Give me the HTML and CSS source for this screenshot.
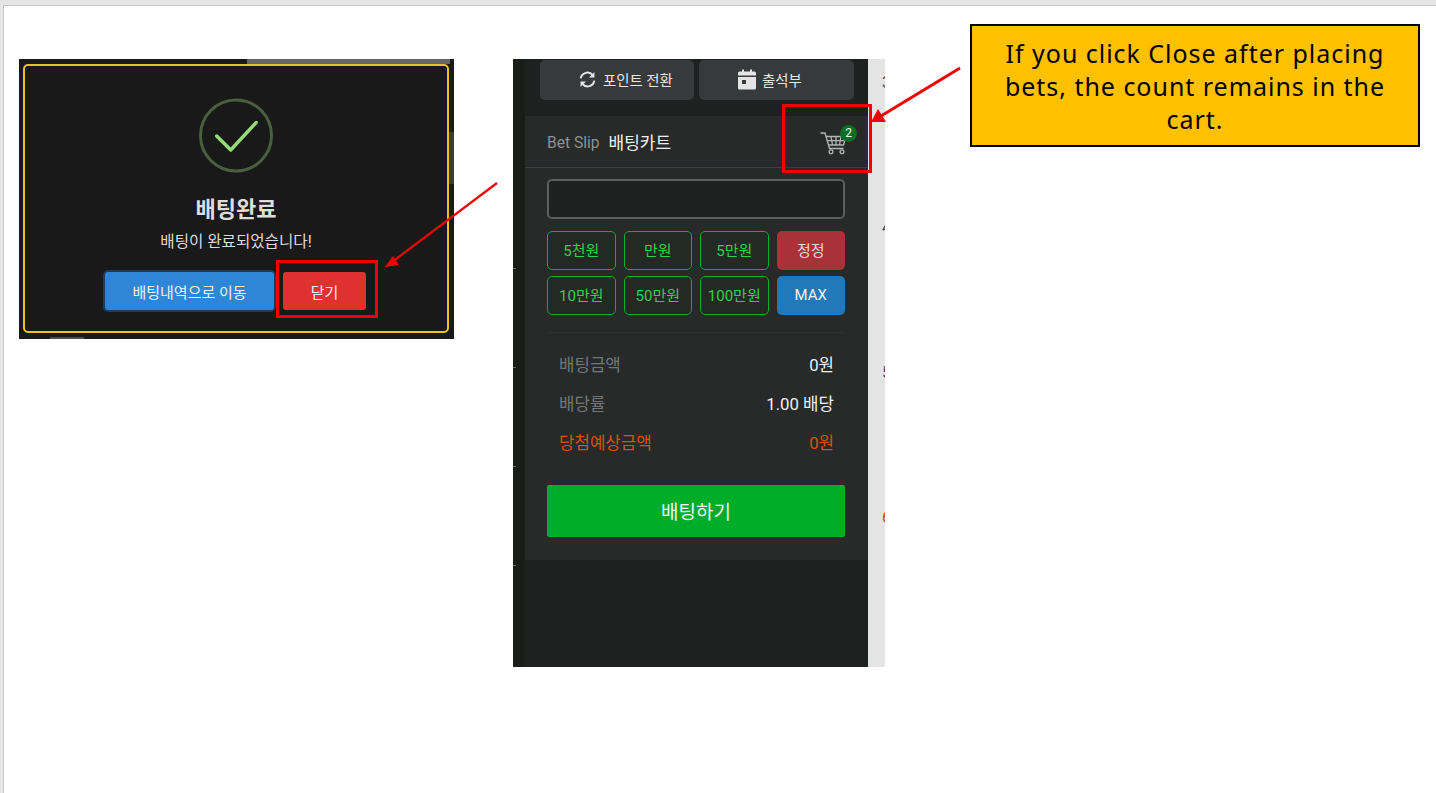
FILE: index.html
```html
<!DOCTYPE html>
<html lang="ko">
<head>
<meta charset="utf-8">
<title>Bet slip note</title>
<link rel="stylesheet" href="styles.css">
</head>
<body>
<main class="slide">
  <section class="shot-dialog">
    <div class="scrap scrap-top"></div>
    <div class="scrap scrap-right"></div>
    <div class="scrap scrap-bottom"></div>
    <div class="dialog">
      <svg class="check" width="76" height="76" viewBox="0 0 76 76" aria-hidden="true">
        <circle cx="38" cy="37.5" r="35.5" fill="none" stroke="#4a5f3e" stroke-width="3"/>
        <path d="M18.7 38 L32.7 52 L58.2 24.5" fill="none" stroke="#95dc78" stroke-width="3.4" stroke-linecap="round" stroke-linejoin="round"/>
      </svg>
      <h1 class="dialog-title">배팅완료</h1>
      <p class="dialog-text">배팅이 완료되었습니다!</p>
      <div class="dialog-actions">
        <button class="btn btn-history">배팅내역으로 이동</button>
        <button class="btn btn-close">닫기</button>
      </div>
    </div>
  </section>

  <section class="shot-panel">
    <div class="gutter">
      <i></i><i></i><i></i><i></i>
    </div>
    <div class="sidebar">
      <div class="top-actions">
        <button class="top-btn top-btn-points">
          <svg width="19" height="17" viewBox="0 0 18 16" aria-hidden="true">
            <path d="M2.6 7 A6.4 6.4 0 0 1 14 4" fill="none" stroke="#e4e4e4" stroke-width="1.9"/>
            <path d="M15.4 9 A6.4 6.4 0 0 1 4 12" fill="none" stroke="#e4e4e4" stroke-width="1.9"/>
            <path d="M15.6 0.8 V6 H10.4 Z M2.4 15.2 V10 H7.6 Z" fill="#e4e4e4"/>
          </svg>
          포인트 전환
        </button>
        <button class="top-btn top-btn-check">
          <svg width="18" height="21" viewBox="0 0 18 21" aria-hidden="true">
            <path d="M4 0.5 H6 V2.5 H12 V0.5 H14 V2.5 H16.5 A1.5 1.5 0 0 1 18 4 V6.5 H0 V4 A1.5 1.5 0 0 1 1.5 2.5 H4 Z" fill="#e4e4e4"/>
            <path fill-rule="evenodd" d="M0 8 H18 V19 A1.5 1.5 0 0 1 16.5 20.5 H1.5 A1.5 1.5 0 0 1 0 19 Z M4 11 V15 H8 V11 Z" fill="#e4e4e4"/>
          </svg>
          출석부
        </button>
      </div>
      <div class="slip">
        <header class="slip-head">
          <span class="slip-en">Bet Slip</span>
          <span class="slip-ko">배팅카트</span>
          <span class="cart">
            <svg width="27" height="23" viewBox="0 0 27 23" aria-hidden="true" fill="none" stroke="#b5b5b5" stroke-width="1.3">
              <path d="M0.5 1 H5 L9.5 16.5 H23.5"/>
              <path d="M6 4.5 H26 L23.5 13 H8.5"/>
              <path d="M11 4.5 L12.5 13 M16 4.5 V13 M21 4.5 L19.5 13 M7.2 8.7 H25"/>
              <circle cx="11" cy="19.8" r="1.9"/>
              <circle cx="22" cy="19.8" r="1.9"/>
            </svg>
            <b class="cart-count">2</b>
          </span>
        </header>
        <div class="slip-body">
          <div class="amount-input"></div>
          <div class="chips">
            <button class="chip">5천원</button>
            <button class="chip">만원</button>
            <button class="chip">5만원</button>
            <button class="chip chip-reset">정정</button>
            <button class="chip">10만원</button>
            <button class="chip">50만원</button>
            <button class="chip">100만원</button>
            <button class="chip chip-max">MAX</button>
          </div>
          <dl class="totals">
            <div class="total-row"><dt>배팅금액</dt><dd>0원</dd></div>
            <div class="total-row"><dt>배당률</dt><dd>1.00 배당</dd></div>
            <div class="total-row total-win"><dt>당첨예상금액</dt><dd>0원</dd></div>
          </dl>
          <button class="bet-btn">배팅하기</button>
        </div>
      </div>
    </div>
    <div class="behind">
      <span class="behind-num">3</span>
      <span class="behind-num">4</span>
      <span class="behind-num">5</span>
      <span class="behind-num behind-red">6</span>
    </div>
  </section>

  <aside class="callout">If you click Close after placing bets, the count remains in the cart.</aside>

  <div class="mark mark-close"></div>
  <div class="mark mark-cart"></div>
  <svg class="arrows" width="1436" height="793" viewBox="0 0 1436 793" aria-hidden="true">
    <path d="M497 183 L392 262" stroke="#f00000" stroke-width="2.2" fill="none"/>
    <path d="M385 267 L393 256 L399 265 Z" fill="#f00000"/>
    <path d="M960 68 L881 116" stroke="#f00000" stroke-width="3" fill="none"/>
    <path d="M871 122 L878 109 L886 122 Z" fill="#f00000"/>
  </svg>
</main>
</body>
</html>
```

FILE: styles.css
```css
* { box-sizing: border-box; }

html, body {
  margin: 0;
  height: 100%;
  overflow: hidden;
}

body {
  background: #e6e6e6;
  font-family: Roboto, "Noto Sans CJK KR", sans-serif;
  padding: 5px 0 0 3px;
}

.slide {
  position: relative;
  width: 1433px;
  height: 788px;
  margin: 0;
  background: #fff;
  border-top: 1px solid #c8c8c8;
  border-left: 1px solid #c8c8c8;
}

button {
  font-family: inherit;
  border: 0;
  padding: 0;
}

/* Screenshot 1: the confirmation dialog */
.shot-dialog {
  position: absolute;
  left: 15px;
  top: 53px;
  width: 435px;
  height: 280px;
  background: #191919;
  padding: 5px 5px 6px 4px;
}

.scrap {
  position: absolute;
  background: #666;
}

.scrap-top {
  left: 228px;
  top: 0;
  width: 203px;
  height: 5px;
}

.scrap-right {
  right: 0;
  top: 73px;
  width: 5px;
  height: 52px;
  background: #3a3a3a;
}

.scrap-bottom {
  left: 31px;
  bottom: 0;
  width: 34px;
  height: 2px;
  background: #4c4c4c;
}

.dialog {
  position: relative;
  height: 100%;
  border: 2px solid #e8c31b;
  border-radius: 5px;
  background: #191919;
  display: flex;
  flex-direction: column;
  align-items: center;
  padding-top: 32px;
}

.check { display: block; }

.dialog-title {
  margin: 21px 0 0;
  font-size: 22px;
  line-height: 30px;
  font-weight: 700;
  color: #dedede;
}

.dialog-text {
  margin: 6px 0 0;
  font-size: 15.6px;
  line-height: 22px;
  color: #dcdcdc;
}

.dialog-actions {
  display: flex;
  align-items: center;
  gap: 9px;
  margin-top: 19px;
  margin-left: -1px;
}

.btn {
  height: 38px;
  font-size: 15px;
  color: #f0f0f0;
  border-radius: 3px;
}

.btn-history {
  width: 169px;
  background: #2f86d8;
  box-shadow: 0 0 0 2px #1f3a5c;
}

.btn-close {
  width: 83px;
  background: #e03131;
}

/* Screenshot 2: the bet slip sidebar */
.shot-panel {
  position: absolute;
  left: 509px;
  top: 53px;
  width: 372px;
  height: 608px;
  display: flex;
}

.gutter {
  position: relative;
  width: 12px;
  background: #1b1d1b;
}

.gutter i {
  display: block;
  width: 3px;
  height: 1px;
  background: #6a6a6a;
  margin-bottom: 98px;
}

.gutter i:first-child { margin-top: 209px; }

.sidebar {
  width: 343px;
  background: #1e211f;
  display: flex;
  flex-direction: column;
}

.behind {
  width: 17px;
  background: #e4e4e4;
  overflow: hidden;
  display: flex;
  flex-direction: column;
  align-items: flex-start;
  padding: 15px 0 0 14px;
  gap: 127px;
}

.behind-num {
  font-size: 16px;
  line-height: 18px;
  color: #444;
}

.behind-red { color: #d8402a; }

.top-actions {
  display: flex;
  gap: 5px;
  padding: 1px 14px 0 15px;
}

.top-btn {
  height: 40px;
  background: #363a3b;
  border-radius: 5px;
  color: #e6e6e6;
  font-size: 14.4px;
  display: flex;
  align-items: center;
  gap: 6px;
  padding-bottom: 1px;
}

.top-btn-points {
  width: 154px;
  padding-left: 38px;
}

.top-btn-check {
  width: 155px;
  padding-left: 39px;
}

.slip {
  margin-top: 16px;
  height: 444px;
  background: #272a28;
}

.slip-head {
  height: 52px;
  display: flex;
  align-items: center;
  padding: 0 22px;
  border-bottom: 1px solid #3c3e46;
}

.slip-en {
  font-size: 15.6px;
  color: #8f9090;
  margin-right: 9px;
  padding-top: 2px;
}

.slip-ko {
  font-size: 17px;
  color: #f0f0f0;
}

.cart {
  position: relative;
  margin-left: auto;
  margin-top: 3px;
  width: 27px;
  height: 23px;
  margin-right: -1px;
}

.cart svg { display: block; }

.cart-count {
  position: absolute;
  left: 20px;
  top: -7px;
  width: 17px;
  height: 17px;
  border-radius: 50%;
  background: #0a6e23;
  color: #f2f2f2;
  font-size: 12px;
  line-height: 17px;
  font-weight: 400;
  text-align: center;
}

.slip-body {
  padding: 11px 23px 0 22px;
}

.amount-input {
  height: 40px;
  background: #1e211f;
  border: 2px solid #5c5d5c;
  border-radius: 5px;
}

.chips {
  display: grid;
  grid-template-columns: repeat(4, 1fr);
  grid-auto-rows: 39px;
  column-gap: 8px;
  row-gap: 6px;
  margin-top: 12px;
  padding-bottom: 17px;
  border-bottom: 1px solid #302f2c;
}

.chip {
  background: #232a23;
  border: 1px solid #10ab30;
  border-radius: 5px;
  color: #38cc52;
  font-size: 15px;
  padding-bottom: 3px;
}

.chip-reset {
  background: #a83237;
  border: 0;
  color: #efd6d6;
}

.chip-max {
  background: #2278b8;
  border: 0;
  color: #eef4f8;
  padding-bottom: 1px;
}

.totals {
  margin: 12px 0 0;
  padding: 0 11px 0 12px;
}

.total-row {
  display: flex;
  justify-content: space-between;
  align-items: center;
  height: 39px;
  font-size: 16.8px;
  color: #f0f0f0;
  padding-bottom: 2px;
}

.total-row dt { color: #747778; }
.total-row dd { margin: 0; }

.total-win dt,
.total-win dd { color: #dc5010; }

.bet-btn {
  display: block;
  width: 100%;
  height: 52px;
  margin-top: 23px;
  background: #00ad29;
  border-radius: 2px;
  color: #f2f8f2;
  font-size: 19px;
  padding-bottom: 2px;
}

/* Annotations laid over the slide */
.callout {
  position: absolute;
  left: 966px;
  top: 18px;
  width: 450px;
  height: 123px;
  background: #ffc000;
  border: 2px solid #000;
  padding: 11px 30px 0;
  font-family: "Noto Sans", "Open Sans", sans-serif;
  font-size: 25px;
  letter-spacing: 0.97px;
  line-height: 33px;
  color: #000;
  text-align: center;
}

.mark {
  position: absolute;
  border: 3px solid #f00000;
}

.mark-close {
  left: 272px;
  top: 254px;
  width: 102px;
  height: 58px;
}

.mark-cart {
  left: 778px;
  top: 98px;
  width: 90px;
  height: 69px;
}

.arrows {
  position: absolute;
  left: -4px;
  top: -6px;
  pointer-events: none;
}
```
